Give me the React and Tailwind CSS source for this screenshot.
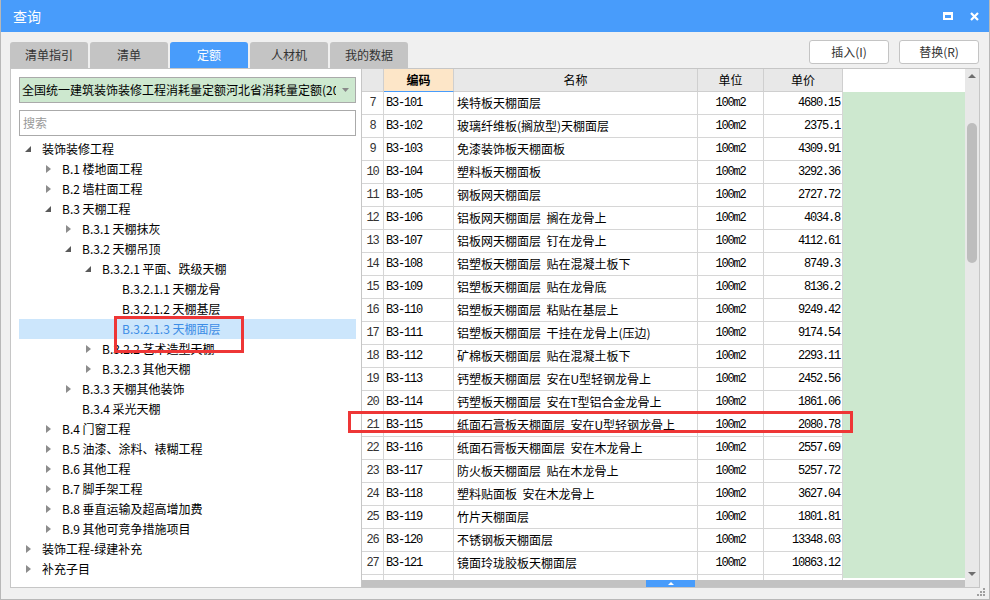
const tree = [
  { level: 0, state: 'open', label: '装饰装修工程' },
  { level: 1, state: 'closed', label: 'B.1 楼地面工程' },
  { level: 1, state: 'closed', label: 'B.2 墙柱面工程' },
  { level: 1, state: 'open', label: 'B.3 天棚工程' },
  { level: 2, state: 'closed', label: 'B.3.1 天棚抹灰' },
  { level: 2, state: 'open', label: 'B.3.2 天棚吊顶' },
  { level: 3, state: 'open', label: 'B.3.2.1 平面、跌级天棚' },
  { level: 4, state: 'leaf', label: 'B.3.2.1.1 天棚龙骨' },
  { level: 4, state: 'leaf', label: 'B.3.2.1.2 天棚基层' },
  { level: 4, state: 'leaf', label: 'B.3.2.1.3 天棚面层', selected: true },
  { level: 3, state: 'closed', label: 'B.3.2.2 艺术造型天棚' },
  { level: 3, state: 'closed', label: 'B.3.2.3 其他天棚' },
  { level: 2, state: 'closed', label: 'B.3.3 天棚其他装饰' },
  { level: 2, state: 'leaf', label: 'B.3.4 采光天棚' },
  { level: 1, state: 'closed', label: 'B.4 门窗工程' },
  { level: 1, state: 'closed', label: 'B.5 油漆、涂料、裱糊工程' },
  { level: 1, state: 'closed', label: 'B.6 其他工程' },
  { level: 1, state: 'closed', label: 'B.7 脚手架工程' },
  { level: 1, state: 'closed', label: 'B.8 垂直运输及超高增加费' },
  { level: 1, state: 'closed', label: 'B.9 其他可竞争措施项目' },
  { level: 0, state: 'closed', label: '装饰工程-绿建补充' },
  { level: 0, state: 'closed', label: '补充子目' },
];

const rows = [
  [7, 'B3-101', '埃特板天棚面层', '4680.15'],
  [8, 'B3-102', '玻璃纤维板(搁放型)天棚面层', '2375.1'],
  [9, 'B3-103', '免漆装饰板天棚面板', '4309.91'],
  [10, 'B3-104', '塑料板天棚面板', '3292.36'],
  [11, 'B3-105', '钢板网天棚面层', '2727.72'],
  [12, 'B3-106', '铝板网天棚面层  搁在龙骨上', '4034.8'],
  [13, 'B3-107', '铝板网天棚面层  钉在龙骨上', '4112.61'],
  [14, 'B3-108', '铝塑板天棚面层  贴在混凝土板下', '8749.3'],
  [15, 'B3-109', '铝塑板天棚面层  贴在龙骨底', '8136.2'],
  [16, 'B3-110', '铝塑板天棚面层  粘贴在基层上', '9249.42'],
  [17, 'B3-111', '铝塑板天棚面层  干挂在龙骨上(压边)', '9174.54'],
  [18, 'B3-112', '矿棉板天棚面层  贴在混凝土板下', '2293.11'],
  [19, 'B3-113', '钙塑板天棚面层  安在U型轻钢龙骨上', '2452.56'],
  [20, 'B3-114', '钙塑板天棚面层  安在T型铝合金龙骨上', '1861.06'],
  [21, 'B3-115', '纸面石膏板天棚面层  安在U型轻钢龙骨上', '2080.78'],
  [22, 'B3-116', '纸面石膏板天棚面层  安在木龙骨上', '2557.69'],
  [23, 'B3-117', '防火板天棚面层  贴在木龙骨上', '5257.72'],
  [24, 'B3-118', '塑料贴面板  安在木龙骨上', '3627.04'],
  [25, 'B3-119', '竹片天棚面层', '1801.81'],
  [26, 'B3-120', '不锈钢板天棚面层', '13348.03'],
  [27, 'B3-121', '镜面玲珑胶板天棚面层', '10863.12'],
];

const tabs = ['清单指引', '清单', '定额', '人材机', '我的数据'];

function Arrow({ state }) {
  if (state === 'open') {
    return (
      <svg width="6" height="6" viewBox="0 0 6 6">
        <polygon points="6,0 6,6 0,6" fill="#595959" />
      </svg>
    );
  }
  if (state === 'closed') {
    return (
      <svg width="5" height="8" viewBox="0 0 5 8">
        <polygon points="0,0 5,4 0,8" fill="#8c8c8c" />
      </svg>
    );
  }
  return null;
}

const mono = "font-['Liberation_Mono',monospace] text-[12px] tracking-[-1.2px]";
const cell = 'border-r border-b border-[#d6d6d6] flex items-center overflow-hidden whitespace-nowrap';

export default function App() {
  return (
    <div className="relative w-[990px] h-[600px] bg-[#f0f0f0] border-x border-b border-[#b8b8b8] flex flex-col overflow-hidden font-['Noto_Sans_CJK_SC',sans-serif] text-[12px] text-black">
      {/* Title bar */}
      <div className="h-[32px] shrink-0 bg-[#489cfb] flex items-center justify-between pl-[12px] pr-[10px] text-white">
        <span className="text-[14px] leading-none">查询</span>
        <div className="flex items-center gap-[17px]">
          <div className="w-[10px] h-[8px] border-2 border-t-[3px] border-white" />
          <svg width="9" height="9" viewBox="0 0 9 9">
            <path d="M1 1 L8 8 M8 1 L1 8" stroke="#fff" strokeWidth="2.2" />
          </svg>
        </div>
      </div>

      {/* Tabs and buttons */}
      <div className="h-[36px] shrink-0 flex justify-between">
        <div className="self-end flex gap-[2px] pl-[9px]">
          {tabs.map((t) => (
            <div
              key={t}
              className={`w-[78px] h-[26px] rounded-t-[3px] flex items-center justify-center ${
                t === '定额' ? 'bg-[#489cfb] text-white' : 'bg-[#c4c4c4] text-[#333]'
              }`}
            >
              {t}
            </div>
          ))}
        </div>
        <div className="flex gap-[10px] pt-[8px] pr-[10px]">
          <button className="w-[80px] h-[24px] bg-white border border-[#c4c4c4] rounded-[3px] text-[#333] text-[12px]">插入(I)</button>
          <button className="w-[80px] h-[24px] bg-white border border-[#c4c4c4] rounded-[3px] text-[#333] text-[12px]">替换(R)</button>
        </div>
      </div>

      {/* Content */}
      <div className="ml-[9px] w-[970px] h-[520px] shrink-0 border border-[#c6c6c6] bg-white flex">
        {/* Tree panel */}
        <div className="w-[351px] shrink-0 border-r border-[#c6c6c6] flex flex-col pl-[8px] pr-[5px] pt-[8px]">
          <div className="h-[26px] bg-[#cde8cf] border border-[#aaaaaa] flex items-center pl-[2px] pr-[6px]">
            <div className="flex-1 overflow-hidden whitespace-nowrap leading-[24px]">
              全国统一建筑装饰装修工程消耗量定额河北省消耗量定额(2012)
            </div>
            <svg width="7" height="4" viewBox="0 0 7 4" className="ml-[6px] shrink-0">
              <polygon points="0,0 7,0 3.5,4" fill="#888" />
            </svg>
          </div>
          <div className="mt-[7px] h-[26px] border border-[#aaaaaa] flex items-center pl-[3px] text-[#999] text-[12px]">
            搜索
          </div>
          <div className="mt-[3px] flex flex-col">
            {tree.map((n, i) => (
              <div
                key={i}
                className={`h-[20px] flex items-center ${n.selected ? 'bg-[#cce6fc] text-[#3d8de6]' : ''}`}
                style={{ paddingLeft: n.level * 20 }}
              >
                <span className="w-[18px] flex items-center justify-center shrink-0">
                  <Arrow state={n.state} />
                </span>
                <span className="ml-[5px] whitespace-nowrap leading-[20px]">{n.label}</span>
              </div>
            ))}
          </div>
        </div>

        {/* Table */}
        <div className="flex-1 flex">
          <div className="w-[603px] flex flex-col">
            <div className="h-[23px] grid grid-cols-[22px_70px_244px_66px_79px_122px]">
              <div className="bg-[#e8e8e8] border-r border-b border-[#cfcfcf]" />
              <div className="bg-[#fde6c8] border-r border-[#cfcfcf] border-b border-b-[#489cfb] flex items-center justify-center font-bold">编码</div>
              <div className="bg-[#e8e8e8] border-r border-b border-[#cfcfcf] flex items-center justify-center">名称</div>
              <div className="bg-[#e8e8e8] border-r border-b border-[#cfcfcf] flex items-center justify-center">单位</div>
              <div className="bg-[#e8e8e8] border-r border-b border-[#cfcfcf] flex items-center justify-center">单价</div>
              <div className="bg-white" />
            </div>
            {rows.map(([no, code, name, price]) => (
              <div key={no} className="h-[23px] grid grid-cols-[22px_70px_244px_66px_79px_122px]">
                <div className={`${cell} justify-center text-[#333] ${mono}`}>{no}</div>
                <div className={`${cell} pl-[2px] ${mono}`}>{code}</div>
                <div className={`${cell} pl-[3px] whitespace-pre`}>{name}</div>
                <div className={`${cell} justify-center ${mono}`}>100m2</div>
                <div className={`${cell} justify-end pr-[2px] ${mono}`}>{price}</div>
                <div className="bg-[#cde8cf]" />
              </div>
            ))}
            <div className="h-[5px] grid grid-cols-[22px_70px_244px_66px_79px_122px]">
              <div className="border-r border-[#d6d6d6]" />
              <div className="border-r border-[#d6d6d6]" />
              <div className="border-r border-[#d6d6d6]" />
              <div className="border-r border-[#d6d6d6]" />
              <div className="border-r border-[#d6d6d6]" />
              <div className="bg-[#cde8cf] h-[3px]" />
            </div>
            <div className="h-[7px] bg-[#c2c2c2] flex">
              <div className="w-[284px]" />
              <div className="w-[49px] bg-[#489cfb] flex items-center justify-center">
                <svg width="6" height="3" viewBox="0 0 6 3">
                  <polygon points="0,3 6,3 3,0" fill="#fff" />
                </svg>
              </div>
            </div>
          </div>

          {/* Vertical scrollbar */}
          <div className="w-[14px] bg-[#e8e8e8] flex flex-col items-center pt-[5px]">
            <svg width="8" height="4" viewBox="0 0 8 4">
              <polygon points="0,4 8,4 4,0" fill="#6e6e6e" />
            </svg>
            <div className="mt-[45px] w-[10px] h-[140px] rounded-full bg-[#bdbdbd]" />
            <div className="flex-1" />
            <svg width="8" height="4" viewBox="0 0 8 4" className="mb-[11px]">
              <polygon points="0,0 8,0 4,4" fill="#6e6e6e" />
            </svg>
          </div>
        </div>
      </div>

      {/* Footer with resize grip */}
      <div className="flex-1 flex justify-end items-end pr-[3px] pb-[2px]">
        <svg width="9" height="9" viewBox="0 0 9 9">
          <rect x="6" y="0" width="2" height="2" fill="#a0a0a0" />
          <rect x="3" y="3" width="2" height="2" fill="#a0a0a0" />
          <rect x="6" y="3" width="2" height="2" fill="#a0a0a0" />
          <rect x="0" y="6" width="2" height="2" fill="#a0a0a0" />
          <rect x="3" y="6" width="2" height="2" fill="#a0a0a0" />
          <rect x="6" y="6" width="2" height="2" fill="#a0a0a0" />
        </svg>
      </div>

      {/* Red annotation boxes */}
      <div className="absolute left-[113px] top-[316px] w-[130px] h-[37px] border-[3px] border-[#ee3636]" />
      <div className="absolute left-[347px] top-[411px] w-[505px] h-[22px] border-[3px] border-[#ee3636]" />
    </div>
  );
}
